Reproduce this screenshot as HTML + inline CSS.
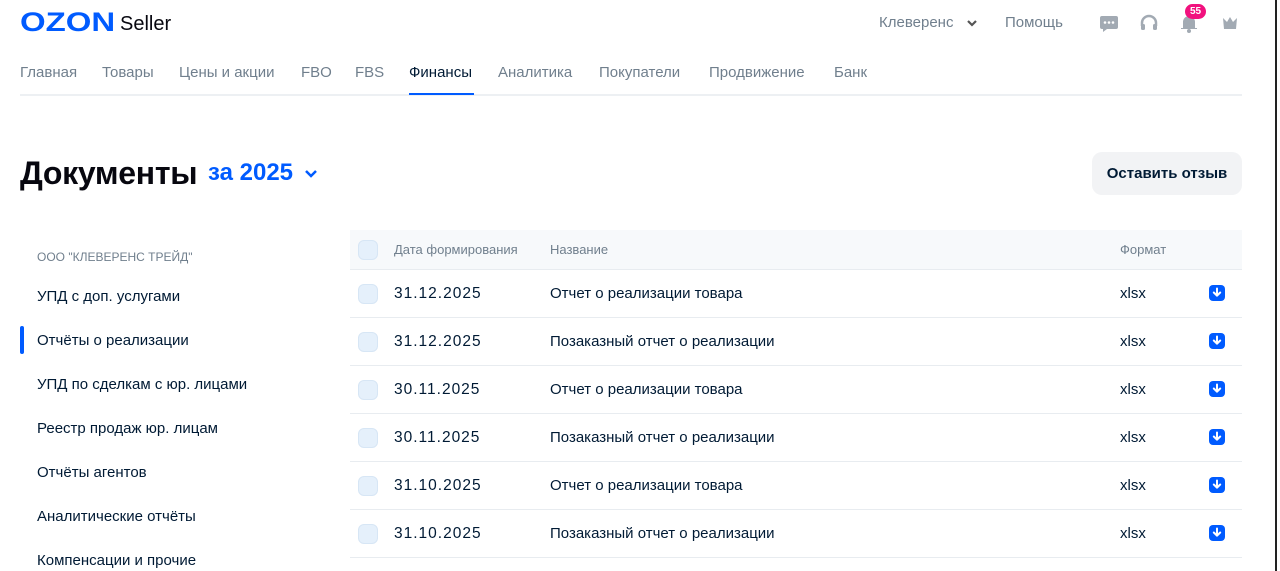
<!DOCTYPE html>
<html><head><meta charset="utf-8"><style>
*{margin:0;padding:0;box-sizing:border-box}
body{width:1280px;height:571px;overflow:hidden;background:#fff;font-family:"Liberation Sans",sans-serif;color:#07070f;position:relative}
.a{position:absolute;white-space:nowrap}
.nav{top:64px;font-size:15px;color:#707f8d}
.side{left:37px;font-size:15px;color:#001a34}
.row{position:absolute;left:350px;width:892px;height:48px;border-bottom:1px solid #e8ecf0}
.row .cb,.hdr .cb{position:absolute;left:8px;top:14px;width:20px;height:20px;border-radius:6px;background:#e5f0fb;border:1px solid #d7e6f5}
.row span{position:absolute;top:15px;font-size:15px;color:#001a34}
.row span.d{font-size:15.5px;letter-spacing:1px}
.dl{position:absolute;left:859px;top:15px;width:16px;height:16px}
</style></head><body>
<div class="a" style="left:20px;top:7px;font-size:27px;font-weight:900;color:#005bff;letter-spacing:0px;transform:scaleX(1.22);transform-origin:left">OZON</div>
<div class="a" style="left:120px;top:13px;font-size:20px;color:#07070f">Seller</div>
<div class="a" style="left:879px;top:14px;font-size:15px;color:#707f8d">Клеверенс</div>
<svg class="a" style="left:966px;top:19px" width="12" height="8" viewBox="0 0 12 8"><path d="M2 2l4 4 4-4" fill="none" stroke="#555" stroke-width="2.2"/></svg>
<div class="a" style="left:1005px;top:14px;font-size:15px;color:#707f8d">Помощь</div>
<svg class="a" style="left:1099px;top:15px" width="20" height="17" viewBox="0 0 20 17"><path d="M3 1h14a2 2 0 0 1 2 2v9a2 2 0 0 1-2 2H8l-4 3v-3H3a2 2 0 0 1-2-2V3a2 2 0 0 1 2-2z" fill="#a2aab3"/><circle cx="6" cy="7.5" r="1.3" fill="#fff"/><circle cx="10" cy="7.5" r="1.3" fill="#fff"/><circle cx="14" cy="7.5" r="1.3" fill="#fff"/></svg>
<svg class="a" style="left:1139px;top:13px" width="20" height="20" viewBox="0 0 20 20"><path d="M3 13V10a7 7 0 0 1 14 0v3" fill="none" stroke="#a2aab3" stroke-width="2.5"/><rect x="2" y="11" width="4" height="6" rx="1.5" fill="#a2aab3"/><rect x="14" y="11" width="4" height="6" rx="1.5" fill="#a2aab3"/></svg>
<svg class="a" style="left:1180px;top:13px" width="18" height="20" viewBox="0 0 18 20"><path d="M3 15V9a6 6 0 0 1 12 0v6h2v1H1v-1z" fill="#a2aab3"/><circle cx="9" cy="18" r="2" fill="#a2aab3"/></svg>
<div class="a" style="left:1185px;top:4px;width:21px;height:15px;border-radius:8px;background:#f1117e;color:#fff;font-size:10px;font-weight:bold;text-align:center;line-height:15px">55</div>
<svg class="a" style="left:1221px;top:14px" width="18" height="18" viewBox="0 0 18 18"><path d="M2 4l4 4 3-5 3 5 4-4-1 11H3z" fill="#a2aab3"/></svg>
<div class="a nav" style="left:20px">Главная</div>
<div class="a nav" style="left:102px">Товары</div>
<div class="a nav" style="left:179px">Цены и акции</div>
<div class="a nav" style="left:301px">FBO</div>
<div class="a nav" style="left:355px">FBS</div>
<div class="a nav" style="left:409px;color:#001a34">Финансы</div>
<div class="a nav" style="left:498px">Аналитика</div>
<div class="a nav" style="left:599px">Покупатели</div>
<div class="a nav" style="left:709px">Продвижение</div>
<div class="a nav" style="left:834px">Банк</div>
<div class="a" style="left:20px;top:94px;width:1222px;height:2px;background:#edf0f3"></div>
<div class="a" style="left:409px;top:93px;width:65px;height:2px;background:#005bff"></div>
<div class="a" style="left:20px;top:155px;font-size:32px;font-weight:bold;color:#07070f;letter-spacing:-0.3px">Документы</div>
<div class="a" style="left:208px;top:159px;font-size:24px;font-weight:bold;color:#005bff">за 2025</div>
<svg class="a" style="left:304px;top:169px" width="14" height="9" viewBox="0 0 14 9"><path d="M2 2l5 5 5-5" fill="none" stroke="#005bff" stroke-width="2.5"/></svg>
<div class="a" style="left:1092px;top:152px;width:150px;height:43px;border-radius:10px;background:#f2f3f5;font-size:15px;font-weight:bold;color:#001a34;text-align:center;line-height:43px">Оставить отзыв</div>
<div class="a" style="left:37px;top:250px;font-size:12px;color:#707f8d">ООО "КЛЕВЕРЕНС ТРЕЙД"</div>
<div class="a side" style="top:288px">УПД с доп. услугами</div>
<div class="a" style="left:20px;top:326px;width:4px;height:28px;border-radius:2px;background:#005bff"></div>
<div class="a side" style="top:332px">Отчёты о реализации</div>
<div class="a side" style="top:376px">УПД по сделкам с юр. лицами</div>
<div class="a side" style="top:420px">Реестр продаж юр. лицам</div>
<div class="a side" style="top:464px">Отчёты агентов</div>
<div class="a side" style="top:508px">Аналитические отчёты</div>
<div class="a side" style="top:552px">Компенсации и прочие</div>
<div class="a hdr" style="left:350px;top:230px;width:892px;height:40px;background:#f7f9fb;border-bottom:1px solid #e8ecf0;font-size:13px;color:#707f8d">
<div class="cb" style="top:10px"></div>
<span style="position:absolute;left:44px;top:12px">Дата формирования</span>
<span style="position:absolute;left:200px;top:12px">Название</span>
<span style="position:absolute;left:770px;top:12px">Формат</span>
</div>
<svg width="0" height="0" style="position:absolute"><defs><symbol id="dl" viewBox="0 0 16 16"><rect width="16" height="16" rx="4" fill="#005bff"/><path d="M8 3.5v7M4.8 7.5L8 10.7l3.2-3.2" fill="none" stroke="#fff" stroke-width="2" stroke-linecap="round" stroke-linejoin="round"/></symbol></defs></svg>
<div class="row" style="top:270px"><div class="cb"></div><span class="d" style="left:44px">31.12.2025</span><span style="left:200px">Отчет о реализации товара</span><span style="left:770px">xlsx</span><svg class="dl"><use href="#dl"/></svg></div>
<div class="row" style="top:318px"><div class="cb"></div><span class="d" style="left:44px">31.12.2025</span><span style="left:200px">Позаказный отчет о реализации</span><span style="left:770px">xlsx</span><svg class="dl"><use href="#dl"/></svg></div>
<div class="row" style="top:366px"><div class="cb"></div><span class="d" style="left:44px">30.11.2025</span><span style="left:200px">Отчет о реализации товара</span><span style="left:770px">xlsx</span><svg class="dl"><use href="#dl"/></svg></div>
<div class="row" style="top:414px"><div class="cb"></div><span class="d" style="left:44px">30.11.2025</span><span style="left:200px">Позаказный отчет о реализации</span><span style="left:770px">xlsx</span><svg class="dl"><use href="#dl"/></svg></div>
<div class="row" style="top:462px"><div class="cb"></div><span class="d" style="left:44px">31.10.2025</span><span style="left:200px">Отчет о реализации товара</span><span style="left:770px">xlsx</span><svg class="dl"><use href="#dl"/></svg></div>
<div class="row" style="top:510px"><div class="cb"></div><span class="d" style="left:44px">31.10.2025</span><span style="left:200px">Позаказный отчет о реализации</span><span style="left:770px">xlsx</span><svg class="dl"><use href="#dl"/></svg></div>
<div class="a" style="left:1275px;top:0;width:2px;height:571px;background:#222"></div>
</body></html>
